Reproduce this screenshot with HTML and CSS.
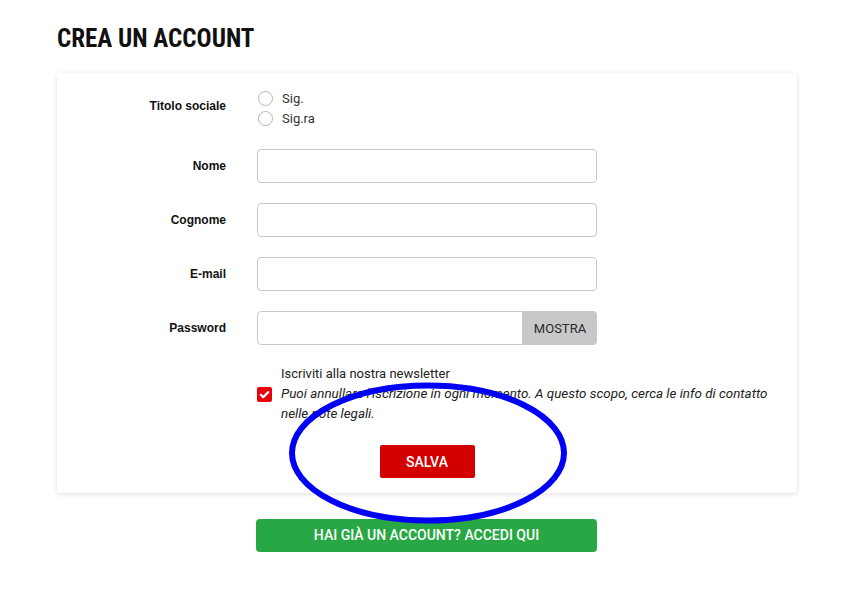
FILE: index.html
```html
<!DOCTYPE html>
<html lang="it">

<head>
  <meta charset="UTF-8">
  <meta name="viewport" content="width=device-width, initial-scale=1.0">
  <title>Crea un account</title>
  <link rel="stylesheet" href="styles.css">
</head>

<body>
  <div class="page">
    <h1>Crea un account</h1>

    <form class="card" id="registerForm">
      <div class="row row-title">
        <span class="label label-top">Titolo sociale</span>
        <div class="radios">
          <label class="radio"><span class="circle"></span>Sig.</label>
          <label class="radio"><span class="circle"></span>Sig.ra</label>
        </div>
      </div>

      <div class="row">
        <label class="label" for="firstname">Nome</label>
        <input type="text" id="firstname" name="firstname">
      </div>

      <div class="row">
        <label class="label" for="lastname">Cognome</label>
        <input type="text" id="lastname" name="lastname">
      </div>

      <div class="row">
        <label class="label" for="email">E-mail</label>
        <input type="email" id="email" name="email">
      </div>

      <div class="row row-last">
        <label class="label" for="password">Password</label>
        <div class="password">
          <input type="password" id="password" name="password">
          <button type="button" class="show-btn">MOSTRA</button>
        </div>
      </div>

      <div class="row row-wide">
        <span></span>
        <div class="newsletter">
          <div class="nl-title">Iscriviti alla nostra newsletter</div>
          <div class="nl-check">
            <span class="checkbox">
              <svg width="11" height="11" viewBox="0 0 12 12"><path d="M2 6.3l2.6 2.6L10 3.4" fill="none" stroke="#fff" stroke-width="2.4" stroke-linecap="round" stroke-linejoin="round"/></svg>
            </span>
            <em>Puoi annullare l'iscrizione in ogni momento. A questo scopo, cerca le info di contatto nelle note legali.</em>
          </div>
        </div>
      </div>

      <div class="row row-submit">
        <span></span>
        <div class="submit-wrap">
          <button type="submit" class="save-btn">SALVA</button>
        </div>
      </div>
    </form>

    <a href="#" class="login-btn">HAI GIÀ UN ACCOUNT? ACCEDI QUI</a>

    <!-- highlight drawn over the save button -->
    <svg class="highlight" width="290" height="156" viewBox="0 0 290 156">
      <ellipse cx="145" cy="78" rx="136" ry="67.5" fill="none" stroke="#0000f5" stroke-width="6"/>
    </svg>
  </div>
</body>

</html>
```

FILE: styles.css
```css
body {
  margin: 0;
  background-color: #fff;
  font-family: Roboto, "Liberation Sans", sans-serif;
  color: #232323;
}

.page {
  position: relative;
  width: 740px;
  padding: 24px 0 40px 57px;
}

h1 {
  margin: 0 0 19px;
  font-family: "Roboto Condensed", "Liberation Sans Narrow", Roboto, sans-serif;
  font-size: 25px;
  line-height: 30px;
  font-weight: 700;
  text-transform: uppercase;
  color: #111;
}

.card {
  background-color: #fff;
  border-radius: 4px;
  box-shadow: 0 1px 5px rgba(0, 0, 0, 0.13);
  padding: 15px 15px 15px 0;
}

.row {
  display: grid;
  grid-template-columns: 169px 340px;
  column-gap: 31px;
  align-items: center;
  margin-bottom: 20px;
}

.row-title {
  align-items: start;
  margin-bottom: 21px;
}

.row-last {
  margin-bottom: 19px;
}

.row-wide {
  grid-template-columns: 169px 1fr;
  margin-bottom: 21px;
}

.row-submit {
  margin-bottom: 0;
}

.label {
  text-align: right;
  font-family: "Liberation Sans", Arial, sans-serif;
  font-size: 12px;
  font-weight: 700;
  color: #111;
}

.label-top {
  padding-top: 8px;
  line-height: 20px;
}

.radios {
  display: flex;
  flex-direction: column;
}

.radio {
  display: flex;
  align-items: center;
  height: 20px;
  font-size: 13px;
  color: #333;
}

.circle {
  width: 13px;
  height: 13px;
  border: 1px solid #b5b5b5;
  border-radius: 50%;
  margin: 0 9px 0 1px;
}

input {
  box-sizing: border-box;
  height: 34px;
  width: 340px;
  border: 1px solid #c8c8c8;
  border-radius: 4px;
  padding: 0 10px;
  font-family: inherit;
  font-size: 13px;
}

.password {
  display: flex;
  width: 340px;
}

.password input {
  flex: 1;
  width: auto;
  border-radius: 4px 0 0 4px;
}

.show-btn {
  width: 74px;
  height: 34px;
  border: none;
  border-radius: 0 4px 4px 0;
  background-color: #c8c8c8;
  color: #2b2b2b;
  font-family: inherit;
  font-size: 13px;
}

.newsletter {
  font-size: 13px;
  line-height: 20px;
  color: #222;
}

.newsletter em {
  font-size: 13.4px;
}

.nl-title {
  padding-left: 24px;
}

.nl-check {
  display: flex;
  align-items: flex-start;
}

.checkbox {
  flex: none;
  display: flex;
  align-items: center;
  justify-content: center;
  width: 15px;
  height: 15px;
  margin: 3px 9px 0 0;
  border-radius: 2px;
  background-color: #e8000f;
}

.submit-wrap {
  text-align: center;
}

.save-btn {
  width: 95px;
  height: 33px;
  border: none;
  border-radius: 2px;
  background-color: #d30000;
  color: #fff;
  font-family: inherit;
  font-size: 14px;
  font-weight: 500;
  cursor: pointer;
}

.login-btn {
  display: block;
  width: 341px;
  height: 33px;
  margin: 26px 0 0 199px;
  border-radius: 4px;
  background-color: #28a745;
  color: #fff;
  text-align: center;
  text-decoration: none;
  font-size: 14px;
  font-weight: 500;
  line-height: 33px;
}

.highlight {
  position: absolute;
  left: 283px;
  top: 375px;
  pointer-events: none;
}
```
